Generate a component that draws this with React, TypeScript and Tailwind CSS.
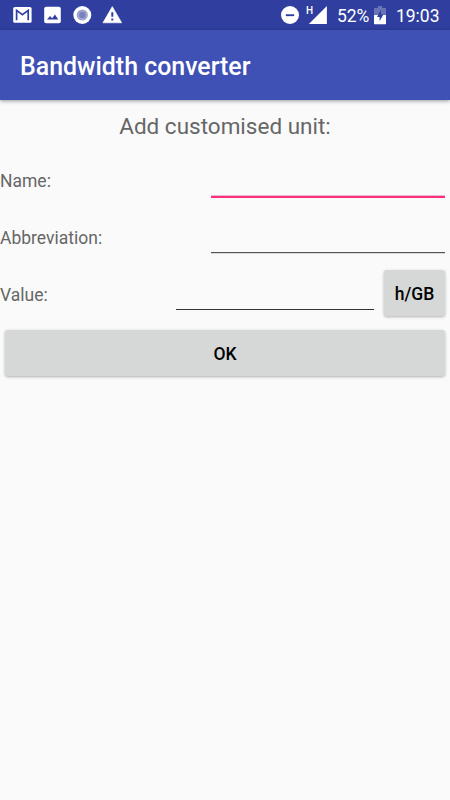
import React, { useState } from "react";

const StatusBar = () => {
  return (
    <div className="h-[30px] bg-[#303f9f] flex items-center justify-between text-white">
      <div className="flex items-center gap-[10px] pl-[12px]">
        {/* mail */}
        <svg width="20" height="20" viewBox="0 0 20 20">
          <rect x="1.2" y="2" width="18.4" height="15.8" rx="1.6" fill="#fff" />
          <path d="M4.6 15.2V5.4l5.8 4.4 5.8-4.4v9.8" fill="none" stroke="#303f9f" strokeWidth="1.7" />
        </svg>
        {/* gallery */}
        <svg width="20" height="20" viewBox="0 0 20 20">
          <rect x="2.2" y="1.8" width="16.6" height="16.4" rx="2" fill="#fff" />
          <path d="M5 14.4l3-3.4 2.2 2.2 2.8-3.8 3.2 5z" fill="#303f9f" />
        </svg>
        {/* record */}
        <svg width="20" height="20" viewBox="0 0 20 20">
          <circle cx="10.3" cy="10" r="9" fill="#fff" />
          <circle cx="10.3" cy="10" r="5.6" fill="#9fa6d3" />
          <circle cx="10.3" cy="10" r="3.2" fill="#7981bd" />
        </svg>
        {/* warning */}
        <svg width="20" height="20" viewBox="0 0 20 20">
          <path d="M10.3 1.6L19.7 17.8H.9z" fill="#fff" stroke="#fff" strokeWidth=".6" strokeLinejoin="round" />
          <path d="M10.3 7.2v4.6M10.3 13.4v2.2" stroke="#303f9f" strokeWidth="2" />
        </svg>
      </div>

      <div className="flex items-center pr-[10.5px] text-[17.5px]">
        <svg width="18" height="18" viewBox="0 0 18 18">
          <circle cx="9" cy="9" r="9" fill="#fff" />
          <path d="M4.8 9.2h8.4" stroke="#303f9f" strokeWidth="1.9" />
        </svg>
        <span className="self-start mt-[5px] ml-[7px] w-[7px] text-[10px] leading-[10px] font-medium">H</span>
        <svg className="-ml-[5px]" width="20" height="20" viewBox="0 0 20 20">
          <path d="M18.9 1V19H.9z" fill="#fff" />
        </svg>
        <span className="ml-[9px] pt-[2px]">52%</span>
        {/* charging battery, half full */}
        <svg className="ml-[4.5px]" width="12" height="20" viewBox="0 0 12 20">
          <path d="M3.8 1h4.4v2H12v7H0V3h3.8z" fill="#6973b8" />
          <path d="M0 10h12v8.6a.6.6 0 0 1-.6.6H.6a.6.6 0 0 1-.6-.6z" fill="#fff" />
          <path d="M7 4.8L3 12h2.6v4.2L9.4 9.4H7z" fill="#303f9f" />
        </svg>
        <span className="ml-[10px] pt-[2px]">19:03</span>
      </div>
    </div>
  );
};

const App = () => {
  const [name, setName] = useState<string>("");
  const [abbreviation, setAbbreviation] = useState<string>("");
  const [value, setValue] = useState<string>("");

  const handleSubmit = (e: React.FormEvent<HTMLFormElement>): void => {
    e.preventDefault();
  };

  return (
    <div className="w-full h-screen flex flex-col overflow-hidden bg-[#fafafa] font-['Roboto',sans-serif] text-[17.5px] text-[#666666]">
      <StatusBar />

      <header className="h-[70px] shrink-0 flex items-center px-5 pt-[3px] bg-[#3f51b5] shadow-[0_1px_4px_rgba(0,0,0,0.4)]">
        <h1 className="text-white text-[24.9px] font-medium">Bandwidth converter</h1>
      </header>

      <form onSubmit={handleSubmit}>
        <h2 className="h-[52px] flex items-center justify-center pt-[2px] text-[22.5px]">
          Add customised unit:
        </h2>

        <div className="h-[57px] flex items-center justify-between pr-[5px]">
          <label htmlFor="name" className="pt-[2px]">Name:</label>
          <input
            id="name"
            value={name}
            onChange={(e) => setName(e.target.value)}
            className="w-[234px] h-9 self-end mb-[11px] border-b-2 border-[#ff2d7b] outline-none shadow-[inset_0_-1px_0_#e6bccb]"
          />
        </div>

        <div className="h-[57px] flex items-center justify-between pr-[5px]">
          <label htmlFor="abbreviation" className="pt-[2px]">Abbreviation:</label>
          <input
            id="abbreviation"
            value={abbreviation}
            onChange={(e) => setAbbreviation(e.target.value)}
            className="w-[234px] h-9 self-end mb-[13px] border-b border-[#555555] outline-none shadow-[0_1px_0_#d8d8d8]"
          />
        </div>

        <div className="h-[56px] flex items-center pr-[5px]">
          <label htmlFor="value" className="pt-[2px]">Value:</label>
          <input
            id="value"
            value={value}
            onChange={(e) => setValue(e.target.value)}
            className="w-[198px] h-9 self-end ml-auto mb-[12px] border-b border-[#333333] outline-none"
          />
          <button
            type="button"
            className="w-[61px] h-[46px] mb-[2px] ml-[10px] pt-[2px] rounded-[3px] bg-[#d6d8d7] text-black font-medium shadow-[0_1px_3px_rgba(0,0,0,0.3)]"
          >
            h/GB
          </button>
        </div>

        <div className="px-[5px] pt-[8px]">
          <button
            type="submit"
            className="w-full h-[46px] pt-[2px] rounded-[3px] bg-[#d6d8d7] text-black font-medium shadow-[0_1px_3px_rgba(0,0,0,0.3)]"
          >
            OK
          </button>
        </div>
      </form>
    </div>
  );
};

export default App;
